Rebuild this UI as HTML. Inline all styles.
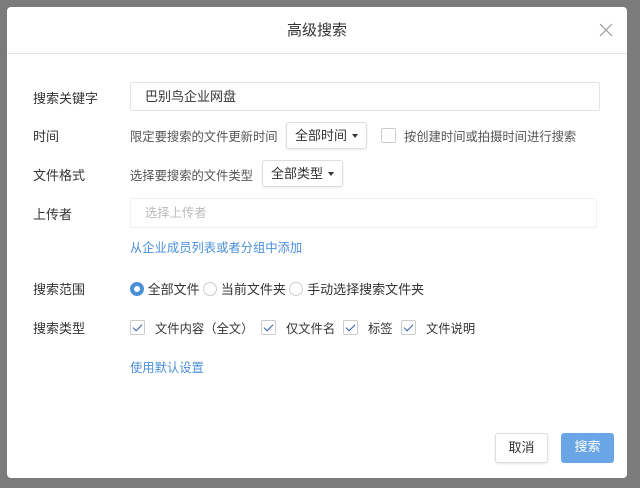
<!DOCTYPE html>
<html><head><meta charset="utf-8"><style>
*{box-sizing:border-box;margin:0;padding:0}
body{width:640px;height:488px;background:#7b7b7b;font-family:"Liberation Sans","Noto Sans CJK SC",sans-serif;font-size:12.3px;color:#333;position:relative;overflow:hidden}
.dlg{position:absolute;left:7px;top:7px;width:620px;height:471px;background:#fff;border-radius:4px}
.hd{height:47px;border-bottom:1px solid #e5e5e5;text-align:center;line-height:47px;font-size:15px;color:#333}
.x{position:absolute;right:14px;top:16px;width:14px;height:14px}
.a{position:absolute;white-space:nowrap}
.lbl{left:26px;font-size:13px}
.g{color:#555}
.inp{border:1px solid #e3e3e3;border-radius:2px}
.dd{border:1px solid #ddd;border-radius:3px;height:27px;line-height:25px;padding:0 8px;box-shadow:0 1px 2px rgba(0,0,0,.08);font-size:13px}
.dd:after{content:"";display:inline-block;margin-left:5px;border-left:3.5px solid transparent;border-right:3.5px solid transparent;border-top:4px solid #333;vertical-align:2px}
.link{color:#4a90d9}
.cb{position:absolute;display:block;width:15px;height:15px;border:1px solid #ccc;border-radius:2px}
.cb.on:after{content:"";position:absolute;left:4px;top:1px;width:4px;height:8px;border:solid #2f5fb0;border-width:0 1.5px 1.5px 0;transform:rotate(45deg)}
.rd{display:inline-block;width:14px;height:14px;border:1px solid #ccc;border-radius:50%;vertical-align:-2px}
.rd.on{border:4px solid #4a90d9}
.btn{height:30px;line-height:28px;text-align:center;border-radius:3px;font-size:13px}
</style></head><body>
<div class="dlg">
<div class="hd">高级搜索</div>
<svg class="x" viewBox="0 0 14 14"><path d="M1 1L13 13M13 1L1 13" stroke="#999" stroke-width="1.2"/></svg>
<div class="a lbl" style="top:81px">搜索关键字</div>
<div class="a inp" style="left:123px;top:75px;width:470px;height:29px;padding-left:14px;line-height:27px;font-size:13px">巴别鸟企业网盘</div>
<div class="a lbl" style="top:119px">时间</div>
<div class="a g" style="left:123px;top:120px">限定要搜索的文件更新时间</div>
<div class="a dd" style="left:279px;top:115px">全部时间</div>
<span class="cb" style="left:374px;top:121px"></span>
<div class="a g" style="left:397px;top:120px">按创建时间或拍摄时间进行搜索</div>
<div class="a lbl" style="top:158px">文件格式</div>
<div class="a g" style="left:123px;top:159px">选择要搜索的文件类型</div>
<div class="a dd" style="left:255px;top:153px">全部类型</div>
<div class="a lbl" style="top:197px">上传者</div>
<div class="a inp" style="left:123px;top:191px;width:467px;height:30px;padding-left:14px;line-height:28px;color:#bbb;border-color:#f0f0f0">选择上传者</div>
<div class="a link" style="left:123px;top:231px">从企业成员列表或者分组中添加</div>
<div class="a lbl" style="top:272px">搜索范围</div>
<div class="a" style="left:123px;top:272px;font-size:13px"><span class="rd on"></span> 全部文件 <span class="rd"></span> 当前文件夹 <span class="rd"></span> 手动选择搜索文件夹</div>
<div class="a lbl" style="top:311px">搜索类型</div>
<span class="cb on" style="left:123px;top:313px"></span><div class="a" style="left:148px;top:312px">文件内容（全文）</div>
<span class="cb on" style="left:254px;top:313px"></span><div class="a" style="left:279px;top:312px">仅文件名</div>
<span class="cb on" style="left:336px;top:313px"></span><div class="a" style="left:361px;top:312px">标签</div>
<span class="cb on" style="left:394px;top:313px"></span><div class="a" style="left:419px;top:312px">文件说明</div>
<div class="a link" style="left:123px;top:351px">使用默认设置</div>
<div class="a btn" style="left:488px;top:426px;width:53px;border:1px solid #ddd;box-shadow:0 1px 2px rgba(0,0,0,.1)">取消</div>
<div class="a btn" style="left:554px;top:426px;width:53px;background:#6aa6e6;color:#fff">搜索</div>
</div>
</body></html>
